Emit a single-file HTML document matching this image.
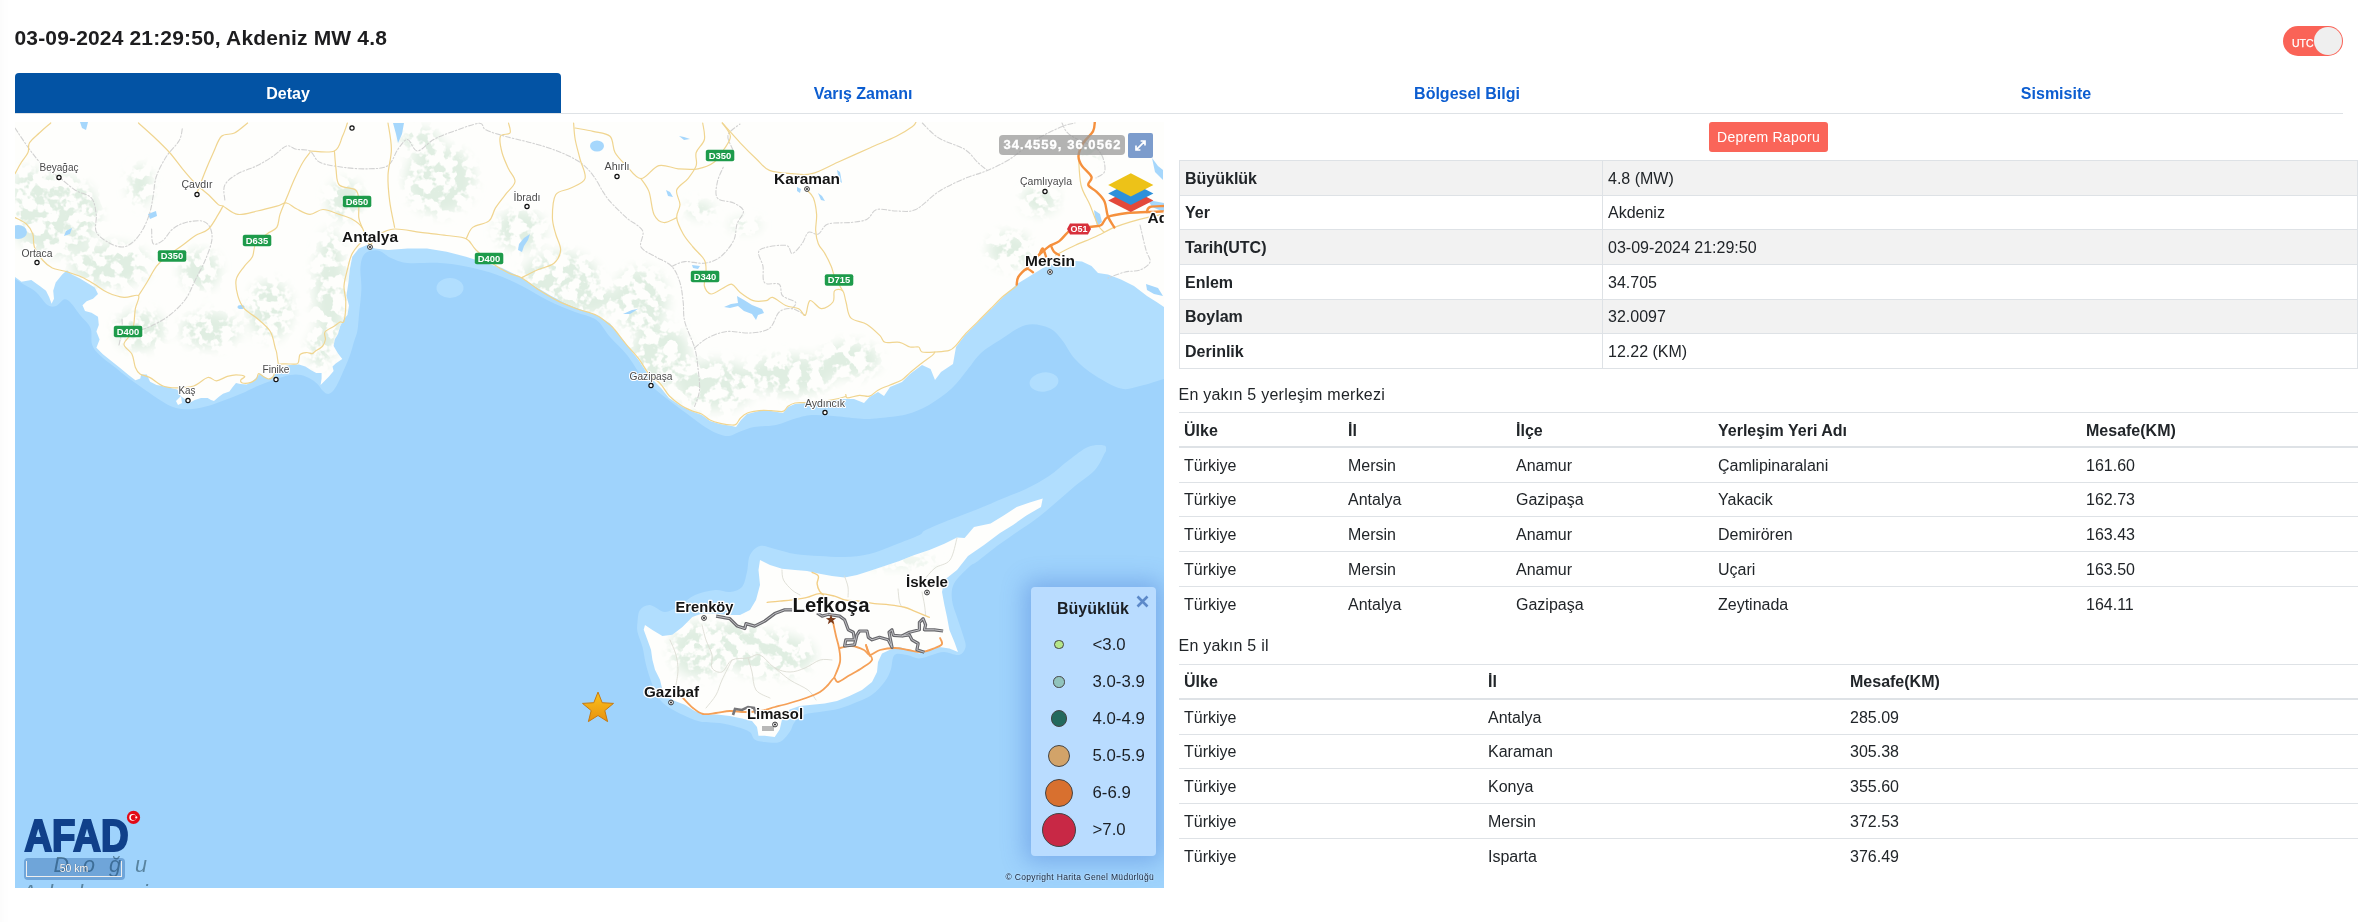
<!DOCTYPE html>
<html><head><meta charset="utf-8"><title>Deprem</title><style>
*{box-sizing:border-box}
html,body{margin:0;padding:0;background:#fff}
body{width:2358px;height:922px;position:relative;overflow:hidden;font-family:"Liberation Sans",sans-serif;color:#212529}
#wrap{position:absolute;left:0;top:0;width:2358px;height:922px;will-change:transform;opacity:.999}
.abs{position:absolute}
#title{left:14.5px;top:25px;font-size:21px;font-weight:bold;line-height:26px;color:#1d1d1f;white-space:nowrap;letter-spacing:.16px}
#toggle{left:2283px;top:26px;width:60px;height:30px;border-radius:15px;background:#fa6357}
#toggle span{position:absolute;left:9px;top:10.5px;font-size:10.5px;line-height:12px;color:#fff;letter-spacing:0;-webkit-text-stroke:.25px #fff}
#toggle i{position:absolute;right:1px;top:1px;width:28px;height:28px;border-radius:14px;background:#efefef}
#tabs{left:15px;top:73px;width:2328px;height:41px;border-bottom:1px solid #dee2e6}
.tab{position:absolute;top:0;height:40px;line-height:42px;text-align:center;font-weight:bold;font-size:16px;color:#0c5dd0}
.tab.on{background:#0353a4;color:#fff;border-radius:4px 4px 0 0}
#btn{left:1709px;top:122px;width:119px;height:30px;border-radius:3px;background:#fa6559;color:#fff;font-size:14px;line-height:30px;text-align:center;letter-spacing:.25px}
table{border-collapse:collapse;position:absolute;table-layout:fixed;font-size:16px}
td,th{padding:2px 5px 0;text-align:left;overflow:hidden;white-space:nowrap}
#t1{left:1179px;top:160px;width:1179px}
#t1 td{height:34.67px;border:1px solid #dee2e6}
#t1 tr:nth-child(odd) td{background:#f2f2f2}
#t1 td:first-child{font-weight:bold;width:423px}
.cap{left:1178.5px;font-size:16px;line-height:20px;white-space:nowrap;letter-spacing:.24px;margin-top:1px}
.lt th{height:34px;border-top:1px solid #dee2e6;border-bottom:2px solid #dee2e6;font-weight:bold}
.t2 th{padding-top:4px}
.lt td{height:34.8px;border-top:1px solid #dee2e6}
.lt tr:first-child+tr td{border-top:none;height:35.6px}
#map{left:15px;top:122px;width:1149px;height:766px;overflow:hidden;background:#9fd3fc}
</style></head><body><div id="wrap">
<div class="abs" style="left:0;top:0;width:12px;height:922px;background:linear-gradient(to right,rgba(0,0,0,.014),rgba(0,0,0,0))"></div>
<div id="title" class="abs">03-09-2024 21:29:50, Akdeniz MW 4.8</div>
<div id="toggle" class="abs"><span>UTC</span><i></i></div>
<div id="tabs" class="abs">
<div class="tab on" style="left:0;width:546px">Detay</div>
<div class="tab" style="left:546px;width:604px">Varış Zamanı</div>
<div class="tab" style="left:1150px;width:604px">Bölgesel Bilgi</div>
<div class="tab" style="left:1754px;width:574px">Sismisite</div>
</div>
<div id="map" class="abs"><svg width="1149" height="766" viewBox="15 122 1149 766" style="position:absolute;left:0;top:0;font-family:'Liberation Sans',sans-serif">
<rect x="15" y="122" width="1149" height="766" fill="#9fd3fc"/>
<path d="M1164.0 379.0C1160.0 380.2 1147.2 384.4 1140.0 386.0C1132.8 387.6 1128.5 390.3 1121.0 388.6C1113.5 386.9 1102.7 380.5 1095.0 375.6C1087.3 370.7 1080.5 364.9 1075.0 359.0C1069.5 353.1 1066.3 345.2 1062.0 340.0C1057.7 334.8 1055.0 330.5 1049.0 328.0C1043.0 325.5 1034.2 323.0 1026.0 325.0C1017.8 327.0 1007.5 335.3 1000.0 340.0C992.5 344.7 986.3 348.2 981.0 353.0C975.7 357.8 972.9 363.1 968.0 369.0C963.1 374.9 958.1 382.6 951.6 388.6C945.1 394.6 936.6 400.7 929.0 405.0C921.4 409.3 914.2 412.4 906.0 414.6C897.8 416.8 887.0 417.3 880.0 418.0C873.0 418.7 870.8 419.2 864.0 419.0C857.2 418.8 847.3 417.2 839.0 416.5C830.7 415.8 821.0 414.8 814.0 415.0C807.0 415.2 803.3 416.3 797.0 418.0C790.7 419.7 783.2 423.5 776.0 425.0C768.8 426.5 760.2 425.8 754.0 427.0C747.8 428.2 743.2 430.5 739.0 432.0C734.8 433.5 732.4 435.7 729.0 436.0C725.6 436.3 722.5 435.5 718.5 434.0C714.5 432.5 710.4 430.5 705.0 427.0C699.6 423.5 692.5 417.8 686.0 413.0C679.5 408.2 673.0 403.7 666.0 398.0C659.0 392.3 650.5 386.2 644.0 379.0C637.5 371.8 632.7 362.0 627.0 355.0C621.3 348.0 615.1 342.8 610.0 337.0C604.9 331.2 602.2 324.2 596.4 320.0C590.6 315.8 583.1 315.2 575.0 312.0C566.9 308.8 556.8 304.8 548.0 300.5C539.2 296.2 530.7 290.3 522.0 286.0C513.3 281.7 505.3 277.8 496.0 274.5C486.7 271.2 475.3 268.4 466.0 266.5C456.7 264.6 449.7 263.6 440.0 263.0C430.3 262.4 415.8 263.8 407.6 263.0C399.4 262.2 395.9 260.1 391.0 258.0C386.1 255.9 382.3 251.2 378.0 250.5C373.7 249.8 367.9 250.8 365.0 253.5C362.1 256.2 361.1 260.6 360.5 266.5C359.9 272.4 361.6 280.9 361.4 289.0C361.1 297.1 359.7 308.0 359.0 315.0C358.3 322.0 358.2 326.4 357.4 330.8C356.6 335.2 355.3 337.5 354.0 341.7C352.7 345.9 351.4 351.3 349.8 355.8C348.2 360.3 346.4 364.3 344.4 368.8C342.4 373.3 340.0 379.2 338.0 383.0C336.0 386.8 334.3 389.8 332.5 391.6C330.7 393.4 328.8 394.2 327.0 393.8C325.2 393.4 323.0 390.9 321.6 389.4C320.2 387.9 320.0 386.6 318.4 385.0C316.8 383.4 314.9 381.4 312.0 379.7C309.1 378.0 304.7 375.8 301.0 375.0C297.3 374.2 294.5 374.2 290.0 375.0C285.5 375.8 279.4 377.9 274.0 379.7C268.6 381.5 263.1 383.6 257.6 386.0C252.1 388.4 246.4 391.5 241.0 393.8C235.6 396.1 230.4 398.0 225.0 400.0C219.6 402.0 214.2 404.2 208.8 405.7C203.4 407.2 198.0 408.6 192.5 409.0C187.0 409.4 181.2 409.3 176.0 408.0C170.8 406.7 166.6 404.0 161.5 401.0C156.4 398.0 150.6 393.7 145.2 390.0C139.8 386.3 134.4 382.7 129.0 378.6C123.6 374.5 117.6 369.5 112.7 365.6C107.8 361.7 103.0 358.5 99.6 355.0C96.1 351.5 93.5 348.9 92.0 344.4C90.5 339.9 92.5 332.9 90.5 328.0C88.5 323.1 83.4 319.3 80.0 315.0C76.6 310.7 72.7 304.6 70.0 302.0C67.3 299.4 66.1 298.8 63.8 299.5C61.5 300.2 58.7 305.1 56.0 306.0C53.3 306.9 50.8 307.3 47.5 305.0C44.2 302.7 39.8 295.3 36.0 292.0C32.2 288.7 28.3 287.2 24.8 285.0C21.3 282.8 16.6 280.0 15.0 279.0 L15 122 L1164 122 Z" fill="#b1defe"/>
<path d="M637.5 622.0C637.9 618.3 637.9 612.8 640.0 610.0C642.1 607.2 645.8 604.7 650.0 605.0C654.2 605.3 660.0 612.0 665.0 612.0C670.0 612.0 675.0 607.8 680.0 605.0C685.0 602.2 689.2 597.5 695.0 595.0C700.8 592.5 709.2 590.5 715.0 590.0C720.8 589.5 725.5 592.5 730.0 592.0C734.5 591.5 739.2 590.3 742.0 587.0C744.8 583.7 745.7 577.3 747.0 572.0C748.3 566.7 747.8 559.3 750.0 555.0C752.2 550.7 755.8 547.0 760.0 546.0C764.2 545.0 769.2 547.7 775.0 549.0C780.8 550.3 787.6 552.8 795.0 554.0C802.4 555.2 811.3 555.5 819.6 556.0C827.9 556.5 836.3 557.3 844.6 557.0C852.9 556.7 861.2 556.0 869.5 554.0C877.8 552.0 886.2 548.2 894.5 545.0C902.8 541.8 914.2 537.5 919.4 535.0C924.6 532.5 920.2 532.7 925.6 530.0C931.0 527.3 943.3 522.5 952.0 519.0C960.7 515.5 969.3 512.5 978.0 509.0C986.7 505.5 996.0 501.3 1004.0 498.0C1012.0 494.7 1018.5 492.7 1026.0 489.0C1033.5 485.3 1041.8 480.8 1049.0 476.0C1056.2 471.2 1062.5 464.8 1069.0 460.0C1075.5 455.2 1082.2 449.4 1088.0 447.0C1093.8 444.6 1101.0 445.0 1104.0 445.5C1107.0 446.0 1105.9 448.6 1106.0 450.0C1106.1 451.4 1106.3 450.3 1104.5 453.6C1102.7 456.9 1099.9 464.6 1095.0 470.0C1090.1 475.4 1081.5 480.6 1075.0 486.0C1068.5 491.4 1062.5 497.0 1056.0 502.5C1049.5 508.0 1042.5 514.1 1036.0 519.0C1029.5 523.9 1023.5 527.5 1017.0 532.0C1010.5 536.5 1003.5 541.2 997.0 546.0C990.5 550.8 982.7 557.5 978.0 561.0C973.3 564.5 973.0 563.2 969.0 567.0C965.0 570.8 956.8 578.1 954.0 583.6C951.2 589.1 951.5 594.4 952.0 600.0C952.5 605.6 955.2 611.2 957.0 617.0C958.8 622.8 961.6 630.0 963.0 635.0C964.4 640.0 966.3 643.7 965.6 647.0C964.9 650.3 962.6 654.2 959.0 655.0C955.4 655.8 948.5 652.0 944.0 652.0C939.5 652.0 936.2 653.9 932.0 655.0C927.8 656.1 923.2 658.5 919.0 658.5C914.8 658.5 911.1 655.6 907.0 655.0C902.9 654.4 897.2 652.5 894.5 655.0C891.8 657.5 892.4 665.5 890.7 670.0C889.0 674.5 887.6 677.9 884.5 682.0C881.4 686.1 876.6 691.4 872.0 694.7C867.4 698.0 862.4 699.7 857.0 702.0C851.6 704.3 845.8 706.7 839.6 708.4C833.4 710.1 825.4 711.0 819.6 712.0C813.8 713.0 808.8 712.9 804.6 714.6C800.5 716.3 797.2 719.1 794.7 722.0C792.2 724.9 792.2 728.7 789.7 732.0C787.2 735.3 783.9 740.3 779.7 742.0C775.5 743.7 768.9 742.4 764.7 742.0C760.5 741.6 757.2 741.3 754.7 739.6C752.2 737.9 752.7 734.1 749.7 732.0C746.8 729.9 742.0 728.5 737.0 727.0C732.0 725.5 725.6 723.8 719.8 723.0C714.0 722.2 707.4 723.0 702.0 722.0C696.6 721.0 692.3 719.1 687.4 717.0C682.5 714.9 677.0 712.5 672.4 709.6C667.8 706.7 663.3 703.9 660.0 699.7C656.7 695.6 654.7 690.5 652.4 684.7C650.1 678.9 647.6 671.0 646.0 664.7C644.4 658.4 643.9 652.5 642.5 647.0C641.1 641.5 638.3 636.2 637.5 632.0C636.7 627.8 637.1 625.7 637.5 622.0Z" fill="#b1defe"/>
<ellipse cx="450" cy="288" rx="13.5" ry="10" fill="#b1defe"/>
<ellipse cx="1044" cy="382" rx="14.5" ry="9.5" fill="#b1defe" transform="rotate(-8 1044 382)"/>
<polygon points="15.0,122.0 1164.0,122.0 1164.0,307.0 1156.6,302.0 1147.0,296.0 1134.0,286.0 1121.0,279.5 1108.0,274.6 1098.0,273.0 1091.5,266.0 1082.0,261.5 1069.0,260.6 1056.0,263.0 1043.0,268.0 1030.0,276.0 1017.0,284.0 1004.0,296.0 991.0,309.0 978.0,322.0 965.0,335.0 956.0,347.0 953.0,364.0 941.0,372.0 935.0,380.0 930.6,369.0 922.0,365.0 910.0,374.0 902.0,382.0 890.0,387.0 884.0,396.0 878.0,392.0 869.5,397.0 864.0,403.0 854.0,399.0 844.0,399.0 824.0,402.0 807.0,403.0 795.0,404.0 788.0,407.0 783.0,413.0 771.0,411.0 759.0,411.0 747.0,414.0 741.0,420.0 736.0,427.0 732.0,426.0 720.0,424.0 710.0,421.0 702.0,415.0 691.0,411.0 681.0,406.0 669.0,398.0 661.0,388.0 649.0,376.0 639.0,360.5 627.0,345.0 615.0,330.0 610.0,323.4 596.4,315.0 583.4,310.4 567.0,304.0 550.8,295.7 534.5,286.0 518.3,276.0 502.0,268.0 485.7,263.0 466.0,256.7 446.7,251.8 427.0,248.5 407.6,248.5 388.0,250.0 375.0,248.5 367.0,245.0 358.8,248.5 352.3,256.7 349.7,269.7 348.4,282.7 346.4,295.7 349.0,305.5 347.4,315.0 343.3,320.0 340.0,326.5 338.0,334.0 334.7,339.5 333.6,346.0 338.0,353.6 342.3,359.0 335.7,363.4 332.5,366.6 333.6,371.0 329.0,376.4 323.8,381.8 320.6,385.0 321.6,378.6 321.6,373.0 316.2,373.0 310.8,370.0 305.4,366.6 298.9,364.5 290.0,365.0 282.6,366.6 277.0,371.0 272.8,377.5 268.5,379.0 264.0,376.4 259.8,373.7 256.5,377.5 252.0,381.8 246.8,384.5 240.3,384.0 236.0,383.0 232.7,387.0 229.4,391.6 223.0,393.8 218.6,397.0 214.0,401.0 211.0,400.0 207.7,398.0 201.0,398.0 194.7,400.0 190.4,402.4 186.0,400.0 180.6,396.0 177.4,389.4 172.7,388.5 166.4,386.7 156.6,385.0 150.1,381.8 146.8,374.5 141.1,374.5 140.3,378.6 135.4,380.2 128.9,375.3 119.2,367.2 111.0,360.7 102.9,354.2 96.4,347.7 99.6,339.5 96.4,331.4 98.8,324.9 98.0,316.7 91.5,312.7 85.0,311.0 82.5,305.3 86.6,301.3 93.0,298.8 98.0,294.0 94.8,287.4 86.6,282.6 80.0,278.5 72.0,274.4 67.0,270.3 62.2,274.4 55.7,282.6 53.2,290.7 54.0,298.8 51.6,303.7 49.2,297.2 46.0,290.7 39.4,285.8 31.3,280.0 21.5,281.7 15.0,276.9" fill="#fefefc"/>
<polygon points="645.0,625.0 652.4,630.0 662.4,636.0 672.4,634.8 682.4,627.0 692.4,617.0 702.0,613.6 715.0,613.6 727.0,615.0 740.0,615.0 750.0,610.0 756.0,600.0 760.0,585.0 758.5,570.0 760.0,560.0 770.0,565.0 782.0,568.7 795.0,570.0 807.0,571.0 819.6,573.7 832.0,576.0 844.6,577.4 857.0,575.0 869.5,571.0 884.5,566.0 899.4,561.0 914.4,555.0 929.4,550.0 944.4,543.7 957.0,537.5 964.6,538.0 974.0,527.0 990.6,523.6 1003.7,515.5 1016.7,507.0 1029.7,502.5 1042.7,498.6 1041.0,507.0 1026.4,515.5 1013.0,525.0 1000.0,533.0 984.0,545.0 968.0,556.0 957.0,570.0 944.4,580.0 942.0,592.0 944.4,605.0 947.0,617.0 949.4,630.0 954.4,642.0 958.0,652.0 949.4,648.5 939.4,647.0 929.4,650.0 919.4,653.5 909.4,650.0 899.4,647.0 889.5,650.0 882.0,653.5 878.0,662.0 877.0,672.0 872.0,682.0 862.0,690.0 849.5,696.0 837.0,701.0 824.6,703.4 812.0,704.7 799.6,706.0 789.7,709.6 782.0,719.6 779.7,729.6 774.7,737.0 764.7,735.8 758.5,735.8 757.0,727.0 752.0,721.0 742.0,718.4 729.8,716.0 717.0,714.6 704.8,714.6 694.8,711.0 684.9,704.7 674.9,701.0 667.4,697.0 662.4,689.7 660.0,679.7 655.0,669.7 652.4,659.7 651.0,649.8 647.4,639.8 643.7,629.8" fill="#fefefc"/>
<defs><filter id="bl" filterUnits="userSpaceOnUse" x="15" y="122" width="1149" height="766"><feGaussianBlur in="SourceAlpha" stdDeviation="6" result="b"/><feTurbulence type="fractalNoise" baseFrequency="0.09" numOctaves="3" seed="7" result="n"/><feColorMatrix in="n" type="matrix" values="0 0 0 0 0 0 0 0 0 0 0 0 0 0 0 9 0 0 0 -4.1" result="na"/><feComposite in="na" in2="b" operator="in" result="m"/><feFlood flood-color="#e0eee2"/><feComposite operator="in" in2="m"/><feGaussianBlur stdDeviation="0.7"/></filter><filter id="sh" x="-30%" y="-30%" width="160%" height="160%"><feGaussianBlur stdDeviation="0.6"/></filter><linearGradient id="stg" x1="0" y1="0" x2="0" y2="1"><stop offset="0" stop-color="#fbc21c"/><stop offset="1" stop-color="#e8920f"/></linearGradient><clipPath id="landclip"><polygon points="15.0,122.0 1164.0,122.0 1164.0,307.0 1156.6,302.0 1147.0,296.0 1134.0,286.0 1121.0,279.5 1108.0,274.6 1098.0,273.0 1091.5,266.0 1082.0,261.5 1069.0,260.6 1056.0,263.0 1043.0,268.0 1030.0,276.0 1017.0,284.0 1004.0,296.0 991.0,309.0 978.0,322.0 965.0,335.0 956.0,347.0 953.0,364.0 941.0,372.0 935.0,380.0 930.6,369.0 922.0,365.0 910.0,374.0 902.0,382.0 890.0,387.0 884.0,396.0 878.0,392.0 869.5,397.0 864.0,403.0 854.0,399.0 844.0,399.0 824.0,402.0 807.0,403.0 795.0,404.0 788.0,407.0 783.0,413.0 771.0,411.0 759.0,411.0 747.0,414.0 741.0,420.0 736.0,427.0 732.0,426.0 720.0,424.0 710.0,421.0 702.0,415.0 691.0,411.0 681.0,406.0 669.0,398.0 661.0,388.0 649.0,376.0 639.0,360.5 627.0,345.0 615.0,330.0 610.0,323.4 596.4,315.0 583.4,310.4 567.0,304.0 550.8,295.7 534.5,286.0 518.3,276.0 502.0,268.0 485.7,263.0 466.0,256.7 446.7,251.8 427.0,248.5 407.6,248.5 388.0,250.0 375.0,248.5 367.0,245.0 358.8,248.5 352.3,256.7 349.7,269.7 348.4,282.7 346.4,295.7 349.0,305.5 347.4,315.0 343.3,320.0 340.0,326.5 338.0,334.0 334.7,339.5 333.6,346.0 338.0,353.6 342.3,359.0 335.7,363.4 332.5,366.6 333.6,371.0 329.0,376.4 323.8,381.8 320.6,385.0 321.6,378.6 321.6,373.0 316.2,373.0 310.8,370.0 305.4,366.6 298.9,364.5 290.0,365.0 282.6,366.6 277.0,371.0 272.8,377.5 268.5,379.0 264.0,376.4 259.8,373.7 256.5,377.5 252.0,381.8 246.8,384.5 240.3,384.0 236.0,383.0 232.7,387.0 229.4,391.6 223.0,393.8 218.6,397.0 214.0,401.0 211.0,400.0 207.7,398.0 201.0,398.0 194.7,400.0 190.4,402.4 186.0,400.0 180.6,396.0 177.4,389.4 172.7,388.5 166.4,386.7 156.6,385.0 150.1,381.8 146.8,374.5 141.1,374.5 140.3,378.6 135.4,380.2 128.9,375.3 119.2,367.2 111.0,360.7 102.9,354.2 96.4,347.7 99.6,339.5 96.4,331.4 98.8,324.9 98.0,316.7 91.5,312.7 85.0,311.0 82.5,305.3 86.6,301.3 93.0,298.8 98.0,294.0 94.8,287.4 86.6,282.6 80.0,278.5 72.0,274.4 67.0,270.3 62.2,274.4 55.7,282.6 53.2,290.7 54.0,298.8 51.6,303.7 49.2,297.2 46.0,290.7 39.4,285.8 31.3,280.0 21.5,281.7 15.0,276.9"/><polygon points="645.0,625.0 652.4,630.0 662.4,636.0 672.4,634.8 682.4,627.0 692.4,617.0 702.0,613.6 715.0,613.6 727.0,615.0 740.0,615.0 750.0,610.0 756.0,600.0 760.0,585.0 758.5,570.0 760.0,560.0 770.0,565.0 782.0,568.7 795.0,570.0 807.0,571.0 819.6,573.7 832.0,576.0 844.6,577.4 857.0,575.0 869.5,571.0 884.5,566.0 899.4,561.0 914.4,555.0 929.4,550.0 944.4,543.7 957.0,537.5 964.6,538.0 974.0,527.0 990.6,523.6 1003.7,515.5 1016.7,507.0 1029.7,502.5 1042.7,498.6 1041.0,507.0 1026.4,515.5 1013.0,525.0 1000.0,533.0 984.0,545.0 968.0,556.0 957.0,570.0 944.4,580.0 942.0,592.0 944.4,605.0 947.0,617.0 949.4,630.0 954.4,642.0 958.0,652.0 949.4,648.5 939.4,647.0 929.4,650.0 919.4,653.5 909.4,650.0 899.4,647.0 889.5,650.0 882.0,653.5 878.0,662.0 877.0,672.0 872.0,682.0 862.0,690.0 849.5,696.0 837.0,701.0 824.6,703.4 812.0,704.7 799.6,706.0 789.7,709.6 782.0,719.6 779.7,729.6 774.7,737.0 764.7,735.8 758.5,735.8 757.0,727.0 752.0,721.0 742.0,718.4 729.8,716.0 717.0,714.6 704.8,714.6 694.8,711.0 684.9,704.7 674.9,701.0 667.4,697.0 662.4,689.7 660.0,679.7 655.0,669.7 652.4,659.7 651.0,649.8 647.4,639.8 643.7,629.8"/></clipPath></defs><g clip-path="url(#landclip)"><g filter="url(#bl)" fill="#000"><ellipse cx="55" cy="215" rx="45" ry="40"/><ellipse cx="110" cy="265" rx="40" ry="22"/><ellipse cx="30" cy="190" rx="18" ry="22"/><ellipse cx="140" cy="185" rx="12" ry="20"/><ellipse cx="330" cy="290" rx="16" ry="60"/><ellipse cx="345" cy="200" rx="18" ry="20"/><ellipse cx="440" cy="180" rx="35" ry="35"/><ellipse cx="560" cy="280" rx="40" ry="28"/><ellipse cx="520" cy="230" rx="25" ry="20"/><ellipse cx="590" cy="300" rx="25" ry="15"/><ellipse cx="420" cy="140" rx="20" ry="12"/><ellipse cx="640" cy="300" rx="28" ry="32"/><ellipse cx="660" cy="355" rx="30" ry="30"/><ellipse cx="715" cy="385" rx="40" ry="25"/><ellipse cx="790" cy="375" rx="45" ry="20"/><ellipse cx="850" cy="360" rx="30" ry="18"/><ellipse cx="700" cy="210" rx="14" ry="8"/><ellipse cx="745" cy="225" rx="16" ry="6"/><ellipse cx="1010" cy="250" rx="22" ry="18"/><ellipse cx="1040" cy="200" rx="18" ry="14"/><ellipse cx="1090" cy="150" rx="10" ry="10"/><ellipse cx="320" cy="350" rx="12" ry="18"/><ellipse cx="140" cy="330" rx="25" ry="20"/><ellipse cx="210" cy="330" rx="30" ry="18"/><ellipse cx="270" cy="310" rx="22" ry="30"/><ellipse cx="200" cy="270" rx="20" ry="20"/><ellipse cx="700" cy="650" rx="30" ry="28"/><ellipse cx="770" cy="655" rx="45" ry="22"/><ellipse cx="735" cy="640" rx="30" ry="18"/><ellipse cx="900" cy="562" rx="40" ry="4"/></g></g><g fill="#a6d7fc"><ellipse cx="18" cy="232" rx="9" ry="7"/><path d="M393 123 L404 123 L402 134 L398 143 L396 134Z"/><ellipse cx="597" cy="146" rx="7" ry="5.5"/><path d="M737 296 L744 300 L752 305 L762 309 L764 313 L758 315 L756 320 L752 314 L744 311 L738 306 L730 308 L724 307 L731 304 L738 303Z"/><path d="M80 122 L88 122 L86 130 L82 128Z"/><path d="M66 231 L72 228 L70 234 L64 236Z"/><path d="M148 214 L156 211 L157 216 L150 219Z"/><path d="M1152 158 L1158 166 L1163 170 L1163 180 L1155 172Z"/><path d="M1148 200 L1164 203 L1164 212 L1152 207Z"/><path d="M1094 210 L1100 214 L1102 222 L1097 226 L1095 218Z"/><path d="M1146 284 L1158 288 L1163 296 L1154 294 L1147 290Z"/><path d="M519 244 L524 238 L530 234 L528 240 L524 246 L522 252 L518 250Z"/><ellipse cx="241" cy="307" rx="3.5" ry="2"/><path d="M837 170 L840 172 L842 183 L839 181Z"/><path d="M797 187 L801 189 L800 193 L797 191Z"/><path d="M818 193 L822 196 L825 201 L821 200Z"/><path d="M679 136 L684 137 L690 139 L684 140Z"/><path d="M666 190 L670 192 L673 197 L668 196Z"/><path d="M692 265 L700 266 L698 269 L693 268Z"/><path d="M623 314 L632 310 L638 309 L630 314Z"/><path d="M176 401 L181 396 L182 403 L178 405Z" fill="#fefefc"/></g><path d="M15.0 128.0C17.5 131.7 25.0 143.3 30.0 150.0C35.0 156.7 40.2 163.5 45.0 168.0C49.8 172.5 53.8 173.3 58.8 177.0C63.8 180.7 69.6 186.5 75.0 190.0C80.4 193.5 87.9 193.9 91.4 198.0C94.9 202.1 95.4 208.8 96.2 214.4C97.0 220.0 94.3 227.0 96.2 231.6C98.1 236.2 103.2 239.4 107.6 242.0C111.9 244.6 118.0 247.1 122.3 247.0C126.6 246.9 130.2 244.5 133.7 241.4C137.2 238.3 140.7 233.3 143.4 228.4C146.1 223.5 148.4 217.4 150.0 212.0C151.6 206.6 152.1 201.8 153.2 195.8C154.3 189.9 154.2 182.8 156.4 176.3C158.6 169.8 162.4 162.8 166.2 156.8C170.0 150.8 176.5 145.4 179.2 140.5C181.9 135.6 181.9 129.7 182.5 127.5" fill="none" stroke="#d2d2d2" stroke-width="1.1" stroke-linejoin="round" stroke-linecap="round" stroke-dasharray="5 2 1.5 2"/><path d="M151.6 229.0C151.9 231.4 151.3 241.8 153.2 243.7C155.1 245.6 159.8 242.8 163.0 240.4C166.2 238.0 168.9 232.0 172.7 229.0C176.5 226.0 180.8 223.8 185.7 222.5C190.6 221.2 197.9 220.2 202.0 221.0C206.1 221.8 208.4 224.2 210.0 227.4C211.6 230.6 212.6 235.0 211.8 240.4C211.0 245.8 208.0 253.5 205.3 260.0C202.6 266.5 198.8 273.0 195.5 279.5C192.2 286.0 190.0 293.0 185.7 299.0C181.4 305.0 175.4 310.7 169.5 315.3C163.6 319.9 156.0 323.9 150.0 326.6C144.0 329.3 136.4 330.7 133.7 331.5" fill="none" stroke="#d2d2d2" stroke-width="1.1" stroke-linejoin="round" stroke-linecap="round" stroke-dasharray="5 2 1.5 2"/><path d="M224.8 200.0C224.8 197.5 222.6 189.4 224.8 185.0C227.0 180.6 232.4 176.9 237.8 173.7C243.2 170.5 251.3 168.6 257.3 165.6C263.3 162.6 268.7 159.1 273.6 155.8C278.5 152.5 282.8 147.1 286.6 146.0C290.4 144.9 292.5 148.5 296.4 149.3C300.3 150.1 306.1 148.8 310.0 151.0C313.9 153.2 314.4 159.6 319.8 162.3C325.2 165.0 334.4 166.1 342.5 167.2C350.6 168.3 361.0 169.1 368.6 168.8C376.2 168.5 383.1 168.8 388.0 165.6C392.9 162.3 394.6 153.7 397.9 149.3C401.2 145.0 404.4 139.2 407.6 139.5C410.9 139.8 413.0 151.0 417.4 151.0C421.8 151.0 427.7 142.8 433.7 139.5C439.7 136.2 445.6 134.1 453.2 131.4C460.8 128.7 473.8 123.6 479.2 123.3C484.6 123.0 481.4 127.6 485.7 129.8C490.0 132.0 497.6 134.1 505.2 136.3C512.8 138.5 522.6 140.4 531.3 142.8C540.0 145.2 549.2 147.8 557.3 151.0C565.4 154.2 574.0 158.2 580.0 162.3C586.0 166.4 589.2 170.4 593.0 175.3C596.8 180.2 600.1 187.2 602.9 191.6C605.7 195.9 606.1 197.1 610.0 201.4C613.9 205.7 620.9 212.7 626.3 217.6C631.7 222.5 640.0 225.7 642.5 230.6C645.0 235.5 638.8 242.7 641.0 247.0C643.2 251.3 650.5 253.5 655.6 256.7C660.7 259.9 667.7 262.1 671.8 266.4C675.9 270.7 678.1 276.7 680.0 282.7C681.9 288.7 682.4 295.7 683.2 302.2C684.0 308.7 682.9 314.2 684.8 321.8C686.7 329.4 692.4 340.2 694.6 347.8C696.8 355.4 697.1 360.3 697.9 367.3C698.7 374.3 700.0 383.5 699.5 390.0C699.0 396.5 695.4 403.7 694.6 406.4" fill="none" stroke="#d2d2d2" stroke-width="1.1" stroke-linejoin="round" stroke-linecap="round" stroke-dasharray="5 2 1.5 2"/><path d="M671.8 266.4C674.0 265.6 679.4 262.1 684.8 261.6C690.2 261.1 698.4 264.0 704.4 263.2C710.4 262.4 715.7 260.5 720.6 256.7C725.5 252.9 731.0 245.8 733.7 240.4C736.4 235.0 735.4 228.9 737.0 224.0C738.6 219.1 743.9 214.5 743.4 211.0C742.9 207.5 738.0 205.2 733.7 203.0C729.4 200.8 720.1 201.5 717.4 198.0C714.7 194.5 716.3 187.2 717.4 181.8C718.5 176.4 722.9 168.3 724.0 165.6" fill="none" stroke="#d2d2d2" stroke-width="1.1" stroke-linejoin="round" stroke-linecap="round" stroke-dasharray="5 2 1.5 2"/><path d="M694.6 347.8C696.8 346.2 702.2 340.7 707.6 338.0C713.0 335.3 719.9 332.3 727.0 331.5C734.1 330.7 742.9 333.5 750.0 333.0C757.1 332.5 764.6 331.8 769.5 328.3C774.4 324.8 775.4 315.3 779.2 312.0C783.0 308.7 787.9 308.1 792.2 308.7C796.6 309.2 803.1 314.2 805.3 315.3" fill="none" stroke="#d2d2d2" stroke-width="1.1" stroke-linejoin="round" stroke-linecap="round" stroke-dasharray="5 2 1.5 2"/><path d="M792.2 308.7C792.8 307.6 797.1 304.4 795.5 302.2C793.9 300.0 785.2 298.7 782.5 295.7C779.8 292.7 782.2 286.5 779.2 284.3C776.2 282.1 767.3 285.7 764.6 282.7C761.9 279.7 763.8 271.8 763.0 266.4C762.2 260.9 755.9 253.5 759.7 250.0C763.5 246.5 780.3 244.7 785.7 245.3C791.1 245.9 789.5 253.7 792.2 253.4C794.9 253.1 799.3 247.2 802.0 243.7C804.7 240.2 805.8 233.9 808.5 232.3C811.2 230.7 815.0 235.4 818.3 234.0C821.5 232.6 822.6 225.9 828.0 224.0C833.4 222.1 844.3 223.3 850.8 222.5C857.3 221.7 862.7 221.4 867.0 219.2C871.3 217.0 871.9 210.9 876.8 209.5C881.7 208.1 889.9 211.0 896.4 211.0C902.9 211.0 908.8 212.7 915.8 209.5C922.8 206.3 930.5 196.8 938.6 191.6C946.7 186.4 956.5 182.1 964.6 178.6C972.7 175.1 979.8 173.7 987.4 170.4C995.0 167.1 1001.9 164.2 1010.0 159.0C1018.1 153.8 1027.5 144.9 1036.2 139.5C1044.9 134.1 1055.7 129.2 1062.2 126.5C1068.7 123.8 1072.9 123.6 1075.0 123.0" fill="none" stroke="#d2d2d2" stroke-width="1.1" stroke-linejoin="round" stroke-linecap="round" stroke-dasharray="5 2 1.5 2"/><path d="M922.3 123.0C925.0 125.5 931.5 133.5 938.6 137.9C945.7 142.3 958.1 145.2 964.6 149.3C971.1 153.4 973.8 158.8 977.6 162.3C981.4 165.8 985.8 169.1 987.4 170.4" fill="none" stroke="#d2d2d2" stroke-width="1.1" stroke-linejoin="round" stroke-linecap="round" stroke-dasharray="5 2 1.5 2"/><path d="M733.0 150.0C732.2 147.5 726.8 139.3 728.0 135.0C729.2 130.7 738.0 125.8 740.0 124.0" fill="none" stroke="#d2d2d2" stroke-width="1.1" stroke-linejoin="round" stroke-linecap="round" stroke-dasharray="5 2 1.5 2"/><path d="M1062.0 123.0C1063.3 125.0 1064.0 130.5 1070.0 135.0C1076.0 139.5 1092.2 144.2 1098.0 150.0C1103.8 155.8 1105.3 165.3 1105.0 170.0C1104.7 174.7 1097.5 176.7 1096.0 178.0" fill="none" stroke="#d2d2d2" stroke-width="1.1" stroke-linejoin="round" stroke-linecap="round" stroke-dasharray="5 2 1.5 2"/><path d="M1140.0 225.0C1141.0 229.2 1144.3 243.8 1146.0 250.0C1147.7 256.2 1151.0 258.7 1150.0 262.0C1149.0 265.3 1144.2 268.3 1140.0 270.0C1135.8 271.7 1130.3 270.7 1125.0 272.0C1119.7 273.3 1110.8 277.0 1108.0 278.0" fill="none" stroke="#d2d2d2" stroke-width="1.1" stroke-linejoin="round" stroke-linecap="round" stroke-dasharray="5 2 1.5 2"/><path d="M119.0 345.0C119.5 342.5 121.5 334.5 122.0 330.0C122.5 325.5 122.0 320.0 122.0 318.0" fill="none" stroke="#d2d2d2" stroke-width="1.1" stroke-linejoin="round" stroke-linecap="round" stroke-dasharray="5 2 1.5 2"/><path d="M50.7 123.0C48.8 124.7 42.8 129.7 39.3 133.0C35.8 136.3 31.4 139.6 29.5 142.8C27.6 146.1 29.4 149.2 28.0 152.5C26.6 155.8 23.6 158.8 21.4 162.3C19.2 165.8 16.1 171.8 15.0 173.7" fill="none" stroke="#f0d590" stroke-width="1.2" stroke-linejoin="round" stroke-linecap="round" /><path d="M15.0 217.6C16.9 218.7 23.3 221.3 26.3 224.0C29.3 226.7 31.4 230.2 32.8 234.0C34.1 237.8 32.8 242.7 34.4 247.0C36.0 251.3 39.5 256.5 42.5 260.0C45.5 263.5 48.5 266.1 52.3 268.0C56.1 269.9 60.4 269.8 65.3 271.3C70.2 272.8 76.7 274.8 81.6 277.0C86.5 279.2 90.3 281.7 94.6 284.3C98.9 286.9 102.7 290.3 107.6 292.5C112.5 294.7 118.8 296.9 124.0 297.4C129.2 297.9 136.6 293.8 138.5 295.7C140.4 297.6 136.1 303.9 135.3 308.8C134.5 313.7 134.5 320.7 133.7 325.0C132.9 329.3 132.0 331.6 130.4 334.8C128.8 338.1 123.7 341.2 124.0 344.5C124.3 347.8 130.1 350.5 132.0 354.3C133.9 358.1 134.0 364.0 135.3 367.3C136.6 370.6 137.6 372.3 140.0 374.0C142.4 375.7 146.2 375.6 150.0 377.6C153.8 379.6 158.7 384.3 163.0 386.0C167.3 387.7 170.9 387.8 176.0 387.8C181.1 387.8 188.3 387.7 193.6 386.0C198.9 384.3 203.9 378.4 207.7 377.5C211.5 376.6 213.1 381.0 216.4 380.8C219.7 380.6 224.0 377.4 227.3 376.4C230.6 375.4 233.1 374.8 236.0 374.8C238.9 374.8 243.8 375.5 244.6 376.4C245.4 377.3 241.2 378.9 240.8 380.0C240.4 381.1 240.7 382.6 242.4 383.0C244.1 383.4 248.7 383.1 251.0 382.4C253.3 381.7 255.2 380.1 256.5 378.6C257.8 377.2 257.4 374.0 258.7 373.7C259.9 373.4 262.4 376.1 264.0 377.0C265.6 377.9 267.0 379.0 268.5 379.0C270.0 379.0 271.7 378.2 272.8 377.0C273.9 375.8 274.1 374.1 275.0 372.0C275.9 369.9 275.7 365.8 278.2 364.5C280.7 363.2 286.7 364.2 290.0 364.0C293.3 363.8 296.1 364.9 297.8 363.4C299.5 361.8 298.6 356.5 300.0 354.7C301.4 352.9 304.5 352.7 306.5 352.5C308.5 352.3 310.6 353.8 312.0 353.6C313.4 353.4 313.2 352.8 315.0 351.5C316.8 350.2 321.0 348.0 322.7 346.0C324.4 344.0 325.0 341.8 325.4 339.5C325.8 337.2 323.6 334.2 325.0 332.0C326.4 329.8 331.1 328.2 333.6 326.5C336.1 324.8 338.3 322.9 340.0 322.0C341.7 321.1 343.0 324.3 344.0 321.0C345.0 317.7 345.8 307.8 345.8 302.0C345.8 296.2 343.7 291.4 344.0 286.0C344.3 280.6 346.0 275.1 347.4 269.7C348.8 264.3 349.6 258.3 352.3 253.4C355.0 248.5 360.8 241.8 363.7 240.4C366.6 239.0 368.9 244.2 370.0 245.0" fill="none" stroke="#f0d590" stroke-width="1.2" stroke-linejoin="round" stroke-linecap="round" /><path d="M278.2 363.4C277.9 361.6 277.1 355.1 276.6 352.5C276.1 349.9 276.2 351.3 275.2 347.8C274.1 344.3 273.3 336.4 270.3 331.5C267.3 326.6 261.6 322.3 257.3 318.5C253.0 314.7 247.6 312.5 244.3 308.7C241.1 304.9 239.2 300.6 237.8 295.7C236.5 290.8 235.1 284.4 236.2 279.5C237.3 274.6 241.6 270.2 244.3 266.4C247.0 262.6 250.5 260.5 252.4 256.7C254.3 252.9 253.3 247.5 255.7 243.7C258.1 239.9 263.5 236.6 267.0 233.9C270.5 231.2 274.6 230.7 276.8 227.4C279.0 224.2 278.4 219.3 280.0 214.4C281.6 209.5 284.2 204.0 286.6 198.0C289.1 192.0 292.0 184.5 294.7 178.6C297.4 172.7 300.3 166.7 302.9 162.3C305.4 158.0 308.8 154.1 310.0 152.5" fill="none" stroke="#f0d590" stroke-width="1.2" stroke-linejoin="round" stroke-linecap="round" /><path d="M138.5 295.7C139.9 293.5 143.7 287.6 146.7 282.7C149.7 277.8 153.2 270.7 156.4 266.4C159.7 262.1 161.8 260.2 166.2 256.7C170.5 253.2 177.6 248.8 182.5 245.3C187.4 241.8 191.2 238.2 195.5 235.5C199.8 232.8 204.7 232.5 208.5 229.0C212.3 225.5 215.9 218.2 218.3 214.4C220.7 210.6 222.2 207.4 223.0 206.0" fill="none" stroke="#f0d590" stroke-width="1.2" stroke-linejoin="round" stroke-linecap="round" /><path d="M138.5 123.0C140.9 125.2 148.0 131.4 153.2 136.3C158.4 141.2 164.6 147.1 169.5 152.5C174.4 157.9 178.2 163.6 182.5 168.8C186.8 174.0 191.2 179.2 195.5 183.5C199.8 187.8 204.7 191.3 208.5 194.8C212.3 198.3 215.9 202.7 218.3 204.6C220.8 206.5 219.9 204.6 223.2 206.2C226.4 207.8 232.1 213.6 237.8 214.4C243.5 215.2 250.8 212.4 257.3 211.0C263.8 209.6 271.9 207.5 276.8 206.2C281.7 204.9 283.3 202.6 286.6 203.0C289.9 203.4 292.5 206.9 296.4 208.8C300.3 210.7 305.6 214.3 310.0 214.4C314.4 214.5 318.1 209.5 323.0 209.5C327.9 209.5 334.4 212.8 339.3 214.4C344.2 216.0 348.5 217.0 352.3 219.2C356.1 221.4 359.6 223.6 362.0 227.4C364.4 231.2 366.2 239.6 367.0 242.0" fill="none" stroke="#f0d590" stroke-width="1.2" stroke-linejoin="round" stroke-linecap="round" /><path d="M197.0 193.0C198.3 189.5 202.3 178.8 205.0 172.0C207.7 165.2 210.7 158.4 213.4 152.5C216.2 146.6 218.0 139.6 221.5 136.3C225.0 133.1 230.2 135.2 234.5 133.0C238.8 130.8 245.4 124.7 247.6 123.0" fill="none" stroke="#f0d590" stroke-width="1.2" stroke-linejoin="round" stroke-linecap="round" /><path d="M310.0 151.0C314.1 151.0 329.0 153.4 334.4 151.0C339.8 148.6 340.3 141.0 342.5 136.3C344.7 131.6 346.6 125.2 347.4 123.0" fill="none" stroke="#f0d590" stroke-width="1.2" stroke-linejoin="round" stroke-linecap="round" /><path d="M334.4 151.0C334.7 154.0 335.2 163.1 336.0 168.8C336.8 174.5 336.0 181.5 339.3 185.0C342.6 188.5 352.4 187.3 355.6 190.0C358.9 192.7 358.3 196.8 358.8 201.4C359.3 206.0 358.3 213.3 358.8 217.6C359.3 221.9 361.5 225.8 362.0 227.4" fill="none" stroke="#f0d590" stroke-width="1.2" stroke-linejoin="round" stroke-linecap="round" /><path d="M388.0 123.0C388.6 127.4 391.4 140.6 391.4 149.3C391.4 158.0 388.3 166.6 388.0 175.3C387.7 184.0 388.6 192.7 389.7 201.4C390.8 210.1 393.8 223.1 394.6 227.4" fill="none" stroke="#f0d590" stroke-width="1.2" stroke-linejoin="round" stroke-linecap="round" /><path d="M370.2 245.3C371.8 243.4 375.9 236.7 380.0 234.0C384.1 231.3 387.8 229.3 394.6 229.0C401.4 228.7 411.9 231.2 420.6 232.3C429.3 233.4 439.1 234.4 446.7 235.5C454.3 236.6 461.3 236.4 466.2 238.8C471.1 241.2 471.7 245.9 476.0 250.0C480.3 254.1 486.8 259.4 492.2 263.2C497.6 267.0 503.6 270.6 508.5 273.0C513.4 275.4 516.6 275.1 521.5 277.8C526.4 280.5 531.8 285.4 537.8 289.2C543.8 293.0 550.8 297.3 557.3 300.6C563.8 303.9 570.3 306.4 576.8 308.8C583.3 311.2 590.9 312.6 596.4 315.3C601.9 318.0 606.9 322.6 610.0 325.0C613.1 327.4 612.2 326.6 615.0 330.0C617.8 333.4 623.0 340.5 627.0 345.3C631.0 350.1 635.1 354.0 638.8 358.8C642.5 363.6 645.3 369.8 649.0 374.0C652.7 378.2 657.5 380.6 660.9 384.3C664.3 388.0 666.0 392.5 669.4 396.0C672.8 399.5 677.5 403.1 681.2 405.5C684.9 407.9 688.0 409.2 691.4 410.6C694.8 412.0 698.5 412.4 701.6 414.0C704.7 415.6 706.9 418.4 710.0 420.0C713.1 421.6 716.6 422.5 720.3 423.3C724.0 424.1 729.3 424.9 732.0 425.0C734.7 425.1 735.0 425.2 736.4 424.0C737.8 422.8 738.8 419.8 740.6 418.0C742.4 416.2 744.3 414.2 747.4 413.0C750.5 411.8 755.3 411.0 759.3 410.6C763.3 410.2 767.2 410.5 771.2 410.6C775.2 410.7 780.2 412.1 783.0 411.4C785.8 410.7 786.0 407.7 788.0 406.3C790.0 404.9 791.9 403.6 795.0 403.0C798.1 402.4 802.0 402.9 806.8 402.6C811.6 402.3 817.5 402.1 823.7 401.2C829.9 400.3 840.3 398.1 844.0 397.0C847.7 395.9 845.2 394.4 845.8 394.5C846.4 394.6 845.2 397.8 847.5 397.9C849.8 398.0 855.7 395.6 859.4 395.3C863.1 395.0 866.4 397.1 869.5 396.2C872.6 395.3 874.6 392.1 878.0 390.2C881.4 388.3 886.0 386.7 890.0 385.0C894.0 383.3 898.4 382.1 901.8 380.0C905.2 377.9 906.9 375.2 910.3 372.4C913.7 369.6 918.3 365.8 922.0 363.0C925.7 360.2 930.1 357.2 932.3 355.4C934.4 353.6 934.5 352.6 934.9 352.0" fill="none" stroke="#f0d590" stroke-width="1.2" stroke-linejoin="round" stroke-linecap="round" /><path d="M466.2 238.8C467.3 236.9 468.9 230.4 472.7 227.4C476.5 224.4 485.2 224.2 489.0 220.9C492.8 217.7 492.8 212.2 495.5 207.9C498.2 203.6 501.9 199.2 505.2 194.8C508.4 190.5 514.5 186.1 515.0 181.8C515.5 177.5 510.7 173.7 508.5 168.8C506.3 163.9 503.4 157.9 502.0 152.5C500.6 147.1 499.1 139.6 500.4 136.3C501.7 133.1 508.6 135.2 510.0 133.0C511.4 130.8 508.8 124.7 508.5 123.0" fill="none" stroke="#f0d590" stroke-width="1.2" stroke-linejoin="round" stroke-linecap="round" /><path d="M521.5 277.8C524.2 276.4 532.4 272.1 537.8 269.7C543.2 267.3 550.2 266.5 554.0 263.2C557.8 259.9 560.3 254.9 560.6 250.0C560.9 245.1 557.1 239.4 555.7 234.0C554.3 228.6 552.4 224.1 552.4 217.6C552.4 211.1 552.7 199.7 555.7 194.8C558.7 189.9 565.4 191.0 570.3 188.3C575.2 185.6 583.4 183.5 585.0 178.6C586.6 173.7 581.6 165.5 580.0 159.0C578.4 152.5 576.3 145.5 575.2 139.5C574.1 133.5 573.9 125.8 573.6 123.0" fill="none" stroke="#f0d590" stroke-width="1.2" stroke-linejoin="round" stroke-linecap="round" /><path d="M575.0 128.0C578.0 128.6 587.2 130.0 593.0 131.4C598.8 132.8 606.3 132.8 610.0 136.3C613.7 139.8 612.3 147.6 615.0 152.5C617.7 157.4 622.0 161.2 626.3 165.6C630.6 169.9 635.6 178.6 641.0 178.6C646.4 178.6 652.6 167.2 658.8 165.6C665.0 164.0 671.8 168.3 678.3 168.8C684.8 169.3 691.9 169.9 697.9 168.8C703.9 167.7 709.6 165.6 714.0 162.3C718.4 159.1 721.3 153.6 724.0 149.3C726.7 145.0 730.7 140.7 730.4 136.3C730.1 131.9 723.6 125.2 722.3 123.0" fill="none" stroke="#f0d590" stroke-width="1.2" stroke-linejoin="round" stroke-linecap="round" /><path d="M702.7 123.0C703.0 125.8 705.5 134.6 704.4 139.5C703.3 144.4 697.6 148.2 696.2 152.5C694.8 156.8 697.6 161.2 696.2 165.6C694.8 169.9 691.2 174.5 688.0 178.6C684.8 182.7 678.0 185.7 676.7 190.0C675.4 194.3 680.0 200.0 680.0 204.6C680.0 209.2 676.2 212.7 676.7 217.6C677.2 222.5 680.5 229.1 683.2 234.0C685.9 238.9 689.5 242.7 693.0 247.0C696.5 251.3 702.2 255.7 704.4 260.0C706.6 264.3 706.0 268.7 706.0 273.0C706.0 277.3 703.6 282.5 704.4 286.0C705.2 289.5 707.7 293.7 711.0 294.0C714.3 294.3 720.5 289.2 724.0 287.6C727.5 286.0 729.3 283.5 732.0 284.3C734.7 285.1 736.7 289.8 740.2 292.5C743.7 295.2 748.9 299.2 753.2 300.6C757.5 302.0 763.0 301.1 766.2 300.6C769.5 300.1 769.5 296.6 772.7 297.4C776.0 298.2 781.4 303.6 785.7 305.5C790.0 307.4 795.4 307.1 798.7 308.7C802.0 310.3 803.4 316.6 805.3 315.3C807.2 314.0 807.3 301.7 810.0 300.6C812.7 299.5 817.7 308.5 821.5 308.7C825.3 308.9 830.8 305.0 833.0 302.0C835.2 299.0 832.9 292.7 834.5 290.8C836.1 288.9 840.8 288.9 842.7 290.8C844.6 292.7 844.6 297.5 846.0 302.0C847.4 306.5 847.3 314.1 850.8 317.8C854.3 321.5 862.1 321.4 867.0 324.4C871.9 327.4 877.0 332.7 880.0 335.7C883.0 338.7 881.7 341.2 885.0 342.3C888.3 343.4 895.4 341.5 899.6 342.3C903.8 343.1 906.8 346.2 910.0 347.0C913.2 347.8 916.7 346.2 918.7 347.0C920.7 347.8 919.3 351.2 922.0 352.0C924.7 352.8 930.5 352.3 935.0 352.0C939.5 351.7 945.8 351.5 949.3 350.4C952.8 349.3 953.5 347.9 956.0 345.3C958.5 342.7 961.0 338.7 964.6 334.8C968.2 330.9 973.3 326.2 977.6 321.8C981.9 317.4 986.2 313.1 990.6 308.7C995.0 304.3 999.4 299.5 1003.7 295.7C1008.1 291.9 1014.5 287.6 1016.7 286.0" fill="none" stroke="#f0d590" stroke-width="1.2" stroke-linejoin="round" stroke-linecap="round" /><path d="M641.0 178.6C642.3 180.8 646.8 185.6 649.0 191.6C651.2 197.6 651.5 209.2 654.0 214.4C656.5 219.6 659.9 222.0 663.7 222.5C667.5 223.0 674.5 218.4 676.7 217.6" fill="none" stroke="#f0d590" stroke-width="1.2" stroke-linejoin="round" stroke-linecap="round" /><path d="M722.3 123.0C725.3 126.3 734.5 136.8 740.2 142.8C745.9 148.8 751.5 154.4 756.4 159.0C761.3 163.6 763.5 168.0 769.5 170.4C775.5 172.8 785.2 173.1 792.2 173.7C799.2 174.2 804.2 175.6 811.8 173.7C819.4 171.8 828.0 166.6 837.8 162.3C847.5 158.0 860.5 152.0 870.3 147.7C880.1 143.4 889.4 139.8 896.4 136.3C903.4 132.8 909.2 128.9 912.5 126.5C915.8 124.1 915.4 122.8 916.0 122.0" fill="none" stroke="#f0d590" stroke-width="1.2" stroke-linejoin="round" stroke-linecap="round" /><path d="M806.9 190.0C808.0 191.3 811.8 193.9 813.4 198.0C815.0 202.1 816.2 209.0 816.6 214.4C817.0 219.8 815.4 225.7 815.7 230.6C816.0 235.5 816.8 239.9 818.3 243.7C819.8 247.5 822.6 249.6 824.8 253.4C827.0 257.2 829.7 262.6 831.3 266.4C832.9 270.2 832.6 272.1 834.5 276.2C836.4 280.3 841.3 288.4 842.7 290.8" fill="none" stroke="#f0d590" stroke-width="1.2" stroke-linejoin="round" stroke-linecap="round" /><path d="M1055.7 255.0C1059.0 253.4 1068.8 248.3 1075.3 245.3C1081.8 242.3 1088.3 240.0 1094.8 237.0C1101.3 234.0 1108.3 229.9 1114.3 227.4C1120.3 224.9 1125.2 223.4 1130.6 221.8C1136.0 220.2 1141.2 218.9 1146.8 217.6C1152.4 216.3 1161.1 214.6 1164.0 214.0" fill="none" stroke="#f0d590" stroke-width="1.2" stroke-linejoin="round" stroke-linecap="round" /><path d="M1078.5 155.8C1078.9 160.7 1079.1 176.8 1081.0 185.0C1082.9 193.2 1087.2 198.3 1090.0 205.0C1092.8 211.7 1095.7 220.5 1098.0 225.0C1100.3 229.5 1103.0 230.8 1104.0 232.0" fill="none" stroke="#f0d590" stroke-width="1.2" stroke-linejoin="round" stroke-linecap="round" /><path d="M1016.7 284.5C1017.0 283.2 1016.7 279.6 1018.3 277.0C1019.9 274.4 1024.0 269.8 1026.4 269.0C1028.9 268.2 1031.9 271.8 1033.0 272.3" fill="none" stroke="#f5903d" stroke-width="2.4" stroke-linejoin="round" stroke-linecap="round" /><path d="M1026.4 269.0C1027.3 267.8 1029.8 264.4 1032.0 262.0C1034.2 259.6 1036.6 257.0 1039.5 254.4C1042.4 251.8 1046.0 248.4 1049.2 246.2C1052.5 244.0 1056.0 243.6 1059.0 241.4C1062.0 239.2 1064.8 235.1 1067.0 233.2C1069.2 231.3 1067.9 231.1 1072.0 230.0C1076.1 228.9 1086.6 227.5 1091.5 226.7C1096.4 225.9 1098.6 226.6 1101.3 225.0C1104.0 223.4 1103.5 219.0 1107.8 217.0C1112.1 215.0 1120.8 213.8 1127.3 213.0C1133.8 212.2 1140.7 212.3 1146.8 212.0C1152.9 211.7 1161.1 211.5 1164.0 211.4" fill="none" stroke="#f5903d" stroke-width="2.4" stroke-linejoin="round" stroke-linecap="round" /><path d="M1039.5 254.4C1040.0 253.4 1041.6 248.1 1042.7 248.5C1043.8 248.9 1045.5 255.3 1046.0 256.7" fill="none" stroke="#f5903d" stroke-width="2.4" stroke-linejoin="round" stroke-linecap="round" /><path d="M1050.8 245.3C1051.3 246.4 1052.6 250.2 1054.0 251.8C1055.4 253.4 1058.2 254.5 1059.0 255.0" fill="none" stroke="#f5903d" stroke-width="2.4" stroke-linejoin="round" stroke-linecap="round" /><path d="M1094.8 122.0C1094.5 123.6 1094.9 127.9 1093.0 131.4C1091.1 134.9 1085.8 138.7 1083.4 142.8C1081.0 146.9 1078.8 152.0 1078.5 155.8C1078.2 159.6 1079.6 162.1 1081.8 165.6C1084.0 169.1 1090.4 173.8 1091.5 177.0C1092.6 180.2 1087.5 182.6 1088.3 185.0C1089.1 187.4 1093.7 188.9 1096.4 191.6C1099.1 194.3 1102.6 197.3 1104.5 201.4C1106.4 205.5 1106.2 211.7 1107.8 216.0C1109.4 220.3 1113.2 225.5 1114.3 227.4" fill="none" stroke="#f5903d" stroke-width="2.4" stroke-linejoin="round" stroke-linecap="round" /><path d="M1146.8 212.0C1147.3 211.2 1147.1 208.0 1150.0 207.0C1152.9 206.0 1161.7 206.2 1164.0 206.0" fill="none" stroke="#f5903d" stroke-width="2.4" stroke-linejoin="round" stroke-linecap="round" /><path d="M670.0 640.0C671.0 642.5 674.7 650.0 676.0 655.0C677.3 660.0 678.0 665.0 678.0 670.0C678.0 675.0 676.3 682.5 676.0 685.0" fill="none" stroke="#dcdcd4" stroke-width="0.9" stroke-linejoin="round" stroke-linecap="round" /><path d="M702.0 625.0C702.7 627.5 704.3 635.0 706.0 640.0C707.7 645.0 711.0 650.3 712.0 655.0C713.0 659.7 710.3 665.2 712.0 668.0C713.7 670.8 718.7 673.3 722.0 672.0C725.3 670.7 727.7 662.3 732.0 660.0C736.3 657.7 743.3 658.8 748.0 658.0C752.7 657.2 755.5 653.3 760.0 655.0C764.5 656.7 770.0 665.2 775.0 668.0C780.0 670.8 785.0 672.0 790.0 672.0C795.0 672.0 800.0 670.0 805.0 668.0C810.0 666.0 815.5 661.3 820.0 660.0C824.5 658.7 830.0 660.0 832.0 660.0" fill="none" stroke="#dcdcd4" stroke-width="0.9" stroke-linejoin="round" stroke-linecap="round" /><path d="M748.0 658.0C748.7 660.3 750.7 666.7 752.0 672.0C753.3 677.3 753.0 685.7 756.0 690.0C759.0 694.3 767.7 696.7 770.0 698.0" fill="none" stroke="#dcdcd4" stroke-width="0.9" stroke-linejoin="round" stroke-linecap="round" /><path d="M732.0 660.0C730.3 663.3 724.7 674.2 722.0 680.0C719.3 685.8 718.7 690.3 716.0 695.0C713.3 699.7 707.7 705.8 706.0 708.0" fill="none" stroke="#dcdcd4" stroke-width="0.9" stroke-linejoin="round" stroke-linecap="round" /><path d="M775.0 668.0C777.5 670.0 784.5 676.3 790.0 680.0C795.5 683.7 803.7 686.7 808.0 690.0C812.3 693.3 814.7 698.3 816.0 700.0" fill="none" stroke="#dcdcd4" stroke-width="0.9" stroke-linejoin="round" stroke-linecap="round" /><path d="M782.0 570.0C782.2 571.7 781.8 576.7 783.5 580.0C785.2 583.3 789.2 587.5 792.0 590.0C794.8 592.5 798.7 594.2 800.0 595.0" fill="none" stroke="#dcdcd4" stroke-width="0.9" stroke-linejoin="round" stroke-linecap="round" /><path d="M844.5 576.0C845.1 577.8 847.4 583.5 848.0 587.0C848.6 590.5 848.0 595.3 848.0 597.0" fill="none" stroke="#dcdcd4" stroke-width="0.9" stroke-linejoin="round" stroke-linecap="round" /><path d="M898.0 589.0C898.2 591.2 898.8 599.0 899.5 602.0C900.2 605.0 901.6 606.2 902.0 607.0" fill="none" stroke="#dcdcd4" stroke-width="0.9" stroke-linejoin="round" stroke-linecap="round" /><path d="M922.0 592.0C922.4 594.2 923.9 601.2 924.5 605.0C925.1 608.8 925.4 613.3 925.6 615.0" fill="none" stroke="#dcdcd4" stroke-width="0.9" stroke-linejoin="round" stroke-linecap="round" /><path d="M957.0 538.0C955.8 541.7 953.7 555.0 950.0 560.0C946.3 565.0 939.3 564.7 935.0 568.0C930.7 571.3 925.8 578.0 924.0 580.0" fill="none" stroke="#dcdcd4" stroke-width="0.9" stroke-linejoin="round" stroke-linecap="round" /><path d="M767.2 602.4C769.3 602.1 775.5 601.5 779.7 601.1C783.8 600.7 787.6 600.5 792.2 599.9C796.7 599.2 802.6 598.4 807.1 597.4C811.7 596.3 815.0 593.8 819.6 593.6C824.2 593.4 830.4 595.1 834.6 596.1C838.7 597.2 840.4 599.0 844.6 599.9C848.7 600.7 854.5 600.5 859.5 601.1C864.5 601.7 869.5 603.0 874.5 603.6C879.5 604.2 884.5 604.2 889.5 604.9C894.5 605.5 900.3 606.3 904.4 607.3C908.6 608.4 910.3 609.4 914.4 611.1C918.6 612.8 926.9 616.3 929.4 617.3" fill="none" stroke="#f2cf86" stroke-width="1.4" stroke-linejoin="round" stroke-linecap="round" /><path d="M812.1 572.4C813.2 573.0 817.5 574.3 818.4 576.2C819.2 578.0 816.9 581.1 817.1 583.6C817.3 586.1 818.6 589.3 819.6 591.1C820.6 593.0 822.7 594.2 823.3 594.9" fill="none" stroke="#f2cf86" stroke-width="1.4" stroke-linejoin="round" stroke-linecap="round" /><path d="M683.0 698.0C684.7 699.7 689.7 705.3 693.0 708.0C696.3 710.7 699.2 713.2 703.0 714.0C706.8 714.8 711.5 713.5 716.0 713.0C720.5 712.5 725.2 711.2 730.0 711.0C734.8 710.8 740.0 712.0 745.0 712.0C750.0 712.0 755.0 711.8 760.0 711.0C765.0 710.2 770.0 708.3 775.0 707.0C780.0 705.7 784.8 704.5 790.0 703.0C795.2 701.5 801.0 699.8 806.0 698.0C811.0 696.2 816.3 694.2 820.0 692.0C823.7 689.8 825.7 687.3 828.0 685.0C830.3 682.7 832.3 678.5 834.0 678.0C835.7 677.5 835.3 682.5 838.0 682.0C840.7 681.5 846.0 677.3 850.0 675.0C854.0 672.7 858.3 670.5 862.0 668.0C865.7 665.5 871.0 662.7 872.0 660.0C873.0 657.3 869.0 654.5 868.0 652.0C867.0 649.5 866.3 646.2 866.0 645.0" fill="none" stroke="#f5a057" stroke-width="1.8" stroke-linejoin="round" stroke-linecap="round" /><path d="M834.0 678.0C835.0 675.3 839.2 667.0 840.0 662.0C840.8 657.0 839.7 652.3 839.0 648.0C838.3 643.7 837.0 640.3 836.0 636.0C835.0 631.7 833.5 624.3 833.0 622.0" fill="none" stroke="#f5a057" stroke-width="1.8" stroke-linejoin="round" stroke-linecap="round" /><path d="M840.0 648.0C842.0 647.7 848.0 645.7 852.0 646.0C856.0 646.3 861.0 648.5 864.0 650.0C867.0 651.5 867.3 655.0 870.0 655.0C872.7 655.0 875.8 651.2 880.0 650.0C884.2 648.8 890.3 648.0 895.0 648.0C899.7 648.0 903.5 649.3 908.0 650.0C912.5 650.7 917.5 652.3 922.0 652.0C926.5 651.7 931.7 649.3 935.0 648.0C938.3 646.7 941.2 645.7 942.0 644.0C942.8 642.3 940.3 639.0 940.0 638.0" fill="none" stroke="#f5a057" stroke-width="1.8" stroke-linejoin="round" stroke-linecap="round" /><path d="M866.0 645.0 L870.0 656.0" fill="none" stroke="#f5a057" stroke-width="1.8" stroke-linejoin="round" stroke-linecap="round" /><path d="M716.1 616.1 L729.8 618.6 L737.3 626.1 L744.8 628.6 L746.0 623.6 L754.7 626.1 L764.7 621.1 L774.7 613.6 L784.7 609.8 L792.2 609.8" fill="none" stroke="#68686c" stroke-width="3.2" stroke-linejoin="round"/><path d="M817.1 612.8 L822.1 616.1 L828.3 614.3 L839.6 616.1 L844.6 619.8 L848.3 629.8 L853.3 632.3 L854.5 639.8 L845.8 639.8 L844.6 646.0 L854.5 644.8 L857.0 634.8 L859.5 631.0 L867.0 631.0 L868.3 637.3 L872.0 639.8 L879.5 637.3 L888.2 639.8 L892.0 647.3 L889.0 632.3 L892.0 629.8 L893.5 635.3 L901.9 636.0 L909.4 634.8 L911.9 639.8 L918.2 643.5 L916.9 649.8 L924.4 652.3" fill="none" stroke="#68686c" stroke-width="3.2" stroke-linejoin="round"/><path d="M901.9 636.0 L909.4 632.3 L919.4 629.8 L919.4 622.3 L923.1 618.6 L925.6 624.8 L924.4 629.8 L934.4 629.8 L943.1 631.0" fill="none" stroke="#68686c" stroke-width="3.2" stroke-linejoin="round"/><path d="M716.1 616.1 L729.8 618.6 L737.3 626.1 L744.8 628.6 L746.0 623.6 L754.7 626.1 L764.7 621.1 L774.7 613.6 L784.7 609.8 L792.2 609.8" fill="none" stroke="#c2c2c6" stroke-width="1" stroke-linejoin="round"/><path d="M817.1 612.8 L822.1 616.1 L828.3 614.3 L839.6 616.1 L844.6 619.8 L848.3 629.8 L853.3 632.3 L854.5 639.8 L845.8 639.8 L844.6 646.0 L854.5 644.8 L857.0 634.8 L859.5 631.0 L867.0 631.0 L868.3 637.3 L872.0 639.8 L879.5 637.3 L888.2 639.8 L892.0 647.3 L889.0 632.3 L892.0 629.8 L893.5 635.3 L901.9 636.0 L909.4 634.8 L911.9 639.8 L918.2 643.5 L916.9 649.8 L924.4 652.3" fill="none" stroke="#c2c2c6" stroke-width="1" stroke-linejoin="round"/><path d="M901.9 636.0 L909.4 632.3 L919.4 629.8 L919.4 622.3 L923.1 618.6 L925.6 624.8 L924.4 629.8 L934.4 629.8 L943.1 631.0" fill="none" stroke="#c2c2c6" stroke-width="1" stroke-linejoin="round"/><path d="M733.0 715.0 L735.0 709.0 L742.0 710.0 L748.0 707.0 L754.0 708.0 L756.0 714.0" fill="none" stroke="#77777a" stroke-width="2.6"/><rect x="762" y="726" width="12" height="5" fill="#9a9a9a" opacity=".7"/><rect x="705.8" y="149.8" width="28.5" height="11.5" rx="2" fill="#1e9b4b"/><text x="720" y="158.7" font-size="9" font-weight="bold" fill="#fff" text-anchor="middle" textLength="22.5" lengthAdjust="spacingAndGlyphs">D350</text><rect x="342.8" y="195.8" width="28.5" height="11.5" rx="2" fill="#1e9b4b"/><text x="357" y="204.7" font-size="9" font-weight="bold" fill="#fff" text-anchor="middle" textLength="22.5" lengthAdjust="spacingAndGlyphs">D650</text><rect x="242.8" y="234.8" width="28.5" height="11.5" rx="2" fill="#1e9b4b"/><text x="257" y="243.7" font-size="9" font-weight="bold" fill="#fff" text-anchor="middle" textLength="22.5" lengthAdjust="spacingAndGlyphs">D635</text><rect x="157.8" y="250.2" width="28.5" height="11.5" rx="2" fill="#1e9b4b"/><text x="172" y="259.2" font-size="9" font-weight="bold" fill="#fff" text-anchor="middle" textLength="22.5" lengthAdjust="spacingAndGlyphs">D350</text><rect x="474.8" y="252.8" width="28.5" height="11.5" rx="2" fill="#1e9b4b"/><text x="489" y="261.7" font-size="9" font-weight="bold" fill="#fff" text-anchor="middle" textLength="22.5" lengthAdjust="spacingAndGlyphs">D400</text><rect x="690.8" y="270.8" width="28.5" height="11.5" rx="2" fill="#1e9b4b"/><text x="705" y="279.7" font-size="9" font-weight="bold" fill="#fff" text-anchor="middle" textLength="22.5" lengthAdjust="spacingAndGlyphs">D340</text><rect x="824.8" y="274.2" width="28.5" height="11.5" rx="2" fill="#1e9b4b"/><text x="839" y="283.2" font-size="9" font-weight="bold" fill="#fff" text-anchor="middle" textLength="22.5" lengthAdjust="spacingAndGlyphs">D715</text><rect x="113.8" y="325.8" width="28.5" height="11.5" rx="2" fill="#1e9b4b"/><text x="128" y="334.7" font-size="9" font-weight="bold" fill="#fff" text-anchor="middle" textLength="22.5" lengthAdjust="spacingAndGlyphs">D400</text><path d="M1067 229 L1070 223.5 L1088 223.5 L1091 229 L1088 234.5 L1070 234.5Z" fill="#d7303b"/><text x="1079" y="232.3" font-size="9" font-weight="bold" fill="#fff" text-anchor="middle" textLength="17" lengthAdjust="spacingAndGlyphs">O51</text><text x="59" y="171" font-size="11.5" fill="#4a4a4a" stroke="#fff" stroke-width="2.2" stroke-linejoin="round" paint-order="stroke" text-anchor="middle" textLength="39" lengthAdjust="spacingAndGlyphs">Beyağaç</text><circle cx="59" cy="177.5" r="2.1" fill="#fff" stroke="#111" stroke-width="1.2"/><text x="197" y="188" font-size="11.5" fill="#4a4a4a" stroke="#fff" stroke-width="2.2" stroke-linejoin="round" paint-order="stroke" text-anchor="middle" textLength="31" lengthAdjust="spacingAndGlyphs">Çavdır</text><circle cx="197" cy="194.5" r="2.1" fill="#fff" stroke="#111" stroke-width="1.2"/><text x="37" y="257" font-size="11.5" fill="#4a4a4a" stroke="#fff" stroke-width="2.2" stroke-linejoin="round" paint-order="stroke" text-anchor="middle" textLength="31" lengthAdjust="spacingAndGlyphs">Ortaca</text><circle cx="37" cy="262.5" r="2.1" fill="#fff" stroke="#111" stroke-width="1.2"/><text x="187" y="394" font-size="11.5" fill="#4a4a4a" stroke="#fff" stroke-width="2.2" stroke-linejoin="round" paint-order="stroke" text-anchor="middle" textLength="17" lengthAdjust="spacingAndGlyphs">Kaş</text><circle cx="188" cy="400.5" r="2.1" fill="#fff" stroke="#111" stroke-width="1.2"/><text x="276" y="373" font-size="11.5" fill="#4a4a4a" stroke="#fff" stroke-width="2.2" stroke-linejoin="round" paint-order="stroke" text-anchor="middle" textLength="27" lengthAdjust="spacingAndGlyphs">Finike</text><circle cx="276" cy="379.5" r="2.1" fill="#fff" stroke="#111" stroke-width="1.2"/><text x="527" y="201" font-size="11.5" fill="#4a4a4a" stroke="#fff" stroke-width="2.2" stroke-linejoin="round" paint-order="stroke" text-anchor="middle" textLength="27" lengthAdjust="spacingAndGlyphs">İbradı</text><circle cx="527" cy="206.5" r="2.1" fill="#fff" stroke="#111" stroke-width="1.2"/><text x="617" y="170" font-size="11.5" fill="#4a4a4a" stroke="#fff" stroke-width="2.2" stroke-linejoin="round" paint-order="stroke" text-anchor="middle" textLength="25" lengthAdjust="spacingAndGlyphs">Ahırlı</text><circle cx="617" cy="176.5" r="2.1" fill="#fff" stroke="#111" stroke-width="1.2"/><text x="651" y="380" font-size="11.5" fill="#4a4a4a" stroke="#fff" stroke-width="2.2" stroke-linejoin="round" paint-order="stroke" text-anchor="middle" textLength="43" lengthAdjust="spacingAndGlyphs">Gazipaşa</text><circle cx="651" cy="385.5" r="2.1" fill="#fff" stroke="#111" stroke-width="1.2"/><text x="825" y="407" font-size="11.5" fill="#4a4a4a" stroke="#fff" stroke-width="2.2" stroke-linejoin="round" paint-order="stroke" text-anchor="middle" textLength="40" lengthAdjust="spacingAndGlyphs">Aydıncık</text><circle cx="825" cy="412.5" r="2.1" fill="#fff" stroke="#111" stroke-width="1.2"/><text x="1046" y="185" font-size="11.5" fill="#4a4a4a" stroke="#fff" stroke-width="2.2" stroke-linejoin="round" paint-order="stroke" text-anchor="middle" textLength="52" lengthAdjust="spacingAndGlyphs">Çamlıyayla</text><circle cx="1045" cy="191.5" r="2.1" fill="#fff" stroke="#111" stroke-width="1.2"/><circle cx="352" cy="128" r="2.1" fill="#fff" stroke="#111" stroke-width="1.2"/><text x="370" y="242" font-size="15" font-weight="bold" fill="#141414" stroke="#fff" stroke-width="2.6" stroke-linejoin="round" paint-order="stroke" text-anchor="middle" textLength="56" lengthAdjust="spacingAndGlyphs">Antalya</text><circle cx="370" cy="247" r="2.4" fill="#fff" stroke="#222" stroke-width="0.9"/><circle cx="370" cy="247" r="1" fill="#222"/><text x="807" y="184" font-size="15" font-weight="bold" fill="#141414" stroke="#fff" stroke-width="2.6" stroke-linejoin="round" paint-order="stroke" text-anchor="middle" textLength="66" lengthAdjust="spacingAndGlyphs">Karaman</text><circle cx="807" cy="189" r="2.4" fill="#fff" stroke="#222" stroke-width="0.9"/><circle cx="807" cy="189" r="1" fill="#222"/><text x="1050" y="266" font-size="15" font-weight="bold" fill="#141414" stroke="#fff" stroke-width="2.6" stroke-linejoin="round" paint-order="stroke" text-anchor="middle" textLength="50" lengthAdjust="spacingAndGlyphs">Mersin</text><circle cx="1050" cy="272" r="2.4" fill="#fff" stroke="#222" stroke-width="0.9"/><circle cx="1050" cy="272" r="1" fill="#222"/><text x="1147.5" y="223" font-size="15.5" font-weight="bold" fill="#141414" stroke="#fff" stroke-width="2.6" paint-order="stroke">Ad</text><text x="831" y="611.5" font-size="20" font-weight="bold" fill="#141414" stroke="#fff" stroke-width="2.6" stroke-linejoin="round" paint-order="stroke" text-anchor="middle" textLength="77" lengthAdjust="spacingAndGlyphs">Lefkoşa</text><path d="M831 614.5 l1.3 3.6 3.8 .1 -3 2.4 1.1 3.7 -3.2 -2.2 -3.2 2.2 1.1 -3.7 -3 -2.4 3.8 -.1z" fill="#7a3b1c"/><text x="704.5" y="612" font-size="14.5" font-weight="bold" fill="#141414" stroke="#fff" stroke-width="2.6" stroke-linejoin="round" paint-order="stroke" text-anchor="middle" textLength="58" lengthAdjust="spacingAndGlyphs">Erenköy</text><circle cx="704" cy="618" r="2.4" fill="#fff" stroke="#222" stroke-width="0.9"/><circle cx="704" cy="618" r="1" fill="#222"/><text x="927" y="587" font-size="14.5" font-weight="bold" fill="#141414" stroke="#fff" stroke-width="2.6" stroke-linejoin="round" paint-order="stroke" text-anchor="middle" textLength="42" lengthAdjust="spacingAndGlyphs">İskele</text><circle cx="927" cy="592.5" r="2.4" fill="#fff" stroke="#222" stroke-width="0.9"/><circle cx="927" cy="592.5" r="1" fill="#222"/><text x="671.5" y="696.5" font-size="14.5" font-weight="bold" fill="#141414" stroke="#fff" stroke-width="2.6" stroke-linejoin="round" paint-order="stroke" text-anchor="middle" textLength="55" lengthAdjust="spacingAndGlyphs">Gazibaf</text><circle cx="671" cy="702.5" r="2.4" fill="#fff" stroke="#222" stroke-width="0.9"/><circle cx="671" cy="702.5" r="1" fill="#222"/><text x="775" y="719" font-size="14.5" font-weight="bold" fill="#141414" stroke="#fff" stroke-width="2.6" stroke-linejoin="round" paint-order="stroke" text-anchor="middle" textLength="56" lengthAdjust="spacingAndGlyphs">Limasol</text><circle cx="775" cy="724.5" r="2.4" fill="#fff" stroke="#222" stroke-width="0.9"/><circle cx="775" cy="724.5" r="1" fill="#222"/><text x="53.5" y="872" font-size="21.5" font-style="italic" fill="#4d7791" opacity=".85" letter-spacing="14">Doğu</text><text x="22" y="900" font-size="21.5" font-style="italic" fill="#4d7791" opacity=".85" letter-spacing="12">Akdeniz</text><polygon points="598.0,692.1 602.2,702.7 613.5,703.4 604.8,710.6 607.6,721.6 598.0,715.5 588.4,721.6 591.2,710.6 582.5,703.4 593.8,702.7" fill="url(#stg)" stroke="#c57a12" stroke-width="1" stroke-linejoin="round"/>
</svg>
<div style="position:absolute;left:984px;top:13px;width:126px;height:19.5px;border-radius:4px;background:rgba(150,150,150,.72);color:#fff;font-weight:bold;font-size:13px;line-height:19.5px;text-align:center;letter-spacing:1.05px;-webkit-text-stroke:.35px #fff;white-space:nowrap;padding-left:1px">34.4559, 36.0562</div><div style="position:absolute;left:1113px;top:11px;width:25px;height:25px;border-radius:2px;background:#7c9ccc"><svg width="25" height="25" viewBox="0 0 25 25"><path d="M8.2 16.8 L16.8 8.2 M12.6 8 L17 8 L17 12.4 M8 12.6 L8 17 L12.4 17" stroke="#fff" stroke-width="1.7" fill="none"/></svg></div><svg style="position:absolute;left:1090px;top:48px" width="50" height="46" viewBox="1105 170 50 46"><polygon points="1130.8,188.8 1153.4,200.4 1130.8,212 1108.2,200.4" fill="#e3483a"/><polygon points="1130.8,181.8 1153.4,193.4 1130.8,205 1108.2,193.4" fill="#2d90da"/><polygon points="1130.8,173.3 1153.4,184.9 1130.8,196.5 1108.2,184.9" fill="#edc218"/></svg><div style="position:absolute;left:1016px;top:465px;width:125px;height:269px;border-radius:4px;background:#b9dcff;box-shadow:0 0 22px 7px rgba(60,110,210,.36)"><div style="position:absolute;left:0;top:12px;width:124px;text-align:center;font-weight:bold;font-size:16px;line-height:20px;color:#1b1f24">Büyüklük</div><svg style="position:absolute;left:105px;top:8px" width="13" height="13" viewBox="0 0 13 13"><path d="M1.5 1.5 L11.5 11.5 M11.5 1.5 L1.5 11.5" stroke="#5c89c9" stroke-width="2.6"/></svg><div style="position:absolute;left:23.4px;top:53.0px;width:9.2px;height:9.2px;border-radius:50%;background:#b5e68a;border:1px solid #444"></div><div style="position:absolute;left:61.5px;top:47.9px;font-size:16.8px;line-height:20px;color:#1b1f24;white-space:nowrap">&lt;3.0</div><div style="position:absolute;left:22.3px;top:89.2px;width:11.4px;height:11.4px;border-radius:50%;background:#91c4bd;border:1px solid #444"></div><div style="position:absolute;left:61.5px;top:85.2px;font-size:16.8px;line-height:20px;color:#1b1f24;white-space:nowrap">3.0-3.9</div><div style="position:absolute;left:19.8px;top:123.3px;width:16.4px;height:16.4px;border-radius:50%;background:#23695d;border:1px solid #444"></div><div style="position:absolute;left:61.5px;top:121.8px;font-size:16.8px;line-height:20px;color:#1b1f24;white-space:nowrap">4.0-4.9</div><div style="position:absolute;left:17.0px;top:157.5px;width:22.0px;height:22.0px;border-radius:50%;background:#d2a369;border:1px solid #444"></div><div style="position:absolute;left:61.5px;top:158.8px;font-size:16.8px;line-height:20px;color:#1b1f24;white-space:nowrap">5.0-5.9</div><div style="position:absolute;left:14.0px;top:191.5px;width:28.0px;height:28.0px;border-radius:50%;background:#d8702f;border:1px solid #444"></div><div style="position:absolute;left:61.5px;top:195.8px;font-size:16.8px;line-height:20px;color:#1b1f24;white-space:nowrap">6-6.9</div><div style="position:absolute;left:10.8px;top:225.6px;width:34.4px;height:34.4px;border-radius:50%;background:#c82845;border:1px solid #444"></div><div style="position:absolute;left:61.5px;top:233.1px;font-size:16.8px;line-height:20px;color:#1b1f24;white-space:nowrap">&gt;7.0</div></div><div style="position:absolute;right:10px;top:750px;font-size:8.5px;line-height:10px;color:#15233b;white-space:nowrap;letter-spacing:.32px;text-shadow:0 0 2px rgba(255,255,255,.8)">© Copyright Harita Genel Müdürlüğü</div><svg style="position:absolute;left:5px;top:685px" width="130" height="50" viewBox="20 807 130 50"><text x="24.5" y="851" font-size="44" font-weight="bold" fill="#10408a" stroke="#10408a" stroke-width="2.2" textLength="104" lengthAdjust="spacingAndGlyphs" font-family="Liberation Sans, sans-serif">AFAD</text><circle cx="133.5" cy="817.4" r="6.6" fill="#e30a17"/><circle cx="132.6" cy="817.4" r="3.3" fill="#fff"/><circle cx="133.5" cy="817.4" r="2.6" fill="#e30a17"/><circle cx="136.3" cy="817.4" r="1.1" fill="#fff"/></svg><div style="position:absolute;left:8.5px;top:736px;width:101px;height:21.5px;border-radius:4px;background:rgba(0,60,136,.3);padding:2.5px 2.5px"><div style="width:96px;height:16.2px;border:1.2px solid #eee;border-top:none;color:#fff;font-size:10.5px;line-height:14px;text-align:center;text-shadow:0 0 1px #345">50 km</div></div>
</div>
<div id="btn" class="abs">Deprem Raporu</div>
<table id="t1">
<tr><td>Büyüklük</td><td>4.8 (MW)</td></tr>
<tr><td>Yer</td><td>Akdeniz</td></tr>
<tr><td>Tarih(UTC)</td><td>03-09-2024 21:29:50</td></tr>
<tr><td>Enlem</td><td>34.705</td></tr>
<tr><td>Boylam</td><td>32.0097</td></tr>
<tr><td>Derinlik</td><td>12.22 (KM)</td></tr>
</table>
<div class="abs cap" style="top:384px">En yakın 5 yerleşim merkezi</div>
<table class="lt t2" style="left:1179px;top:412px;width:1179px">
<colgroup><col style="width:164px"><col style="width:168px"><col style="width:202px"><col style="width:368px"><col></colgroup>
<tr><th>Ülke</th><th>İl</th><th>İlçe</th><th>Yerleşim Yeri Adı</th><th>Mesafe(KM)</th></tr>
<tr><td>Türkiye</td><td>Mersin</td><td>Anamur</td><td>Çamlipinaralani</td><td>161.60</td></tr>
<tr><td>Türkiye</td><td>Antalya</td><td>Gazipaşa</td><td>Yakacik</td><td>162.73</td></tr>
<tr><td>Türkiye</td><td>Mersin</td><td>Anamur</td><td>Demirören</td><td>163.43</td></tr>
<tr><td>Türkiye</td><td>Mersin</td><td>Anamur</td><td>Uçari</td><td>163.50</td></tr>
<tr><td>Türkiye</td><td>Antalya</td><td>Gazipaşa</td><td>Zeytinada</td><td>164.11</td></tr>
</table>
<div class="abs cap" style="top:635px">En yakın 5 il</div>
<table class="lt" style="left:1179px;top:664px;width:1179px">
<colgroup><col style="width:304px"><col style="width:362px"><col></colgroup>
<tr><th>Ülke</th><th>İl</th><th>Mesafe(KM)</th></tr>
<tr><td>Türkiye</td><td>Antalya</td><td>285.09</td></tr>
<tr><td>Türkiye</td><td>Karaman</td><td>305.38</td></tr>
<tr><td>Türkiye</td><td>Konya</td><td>355.60</td></tr>
<tr><td>Türkiye</td><td>Mersin</td><td>372.53</td></tr>
<tr><td>Türkiye</td><td>Isparta</td><td>376.49</td></tr>
</table>
</div></body></html>
